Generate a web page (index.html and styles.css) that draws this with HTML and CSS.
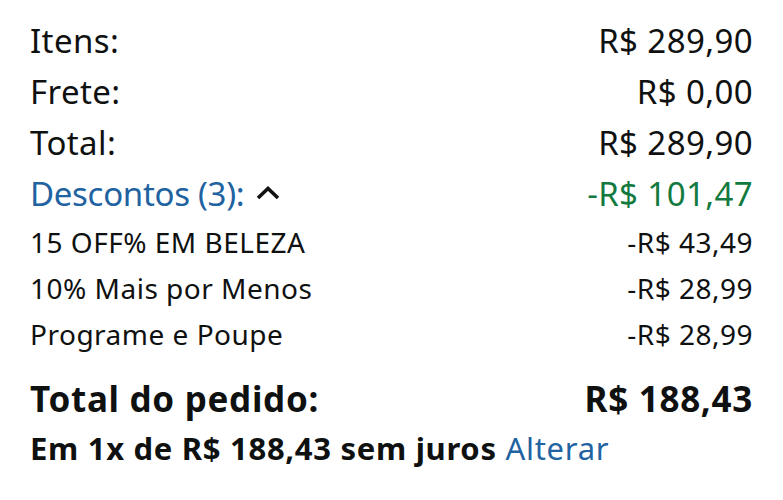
FILE: index.html
```html
<!DOCTYPE html>
<html lang="pt-BR">
<head>
<meta charset="utf-8">
<link rel="stylesheet" href="styles.css">
</head>
<body>
<div class="summary">
  <div class="row main"><span>Itens:</span><span>R$ 289,90</span></div>
  <div class="row main"><span>Frete:</span><span>R$ 0,00</span></div>
  <div class="row main"><span>Total:</span><span>R$ 289,90</span></div>
  <div class="row main">
    <span class="link toggle">Descontos (3):<svg class="chev" width="24" height="14" viewBox="0 0 24 14"><path d="M2 12 L12 2.5 L22 12" fill="none" stroke="#111" stroke-width="3.6"/></svg></span>
    <span class="green">-R$ 101,47</span>
  </div>
  <div class="row sub"><span>15 OFF% EM BELEZA</span><span>-R$ 43,49</span></div>
  <div class="row sub"><span>10% Mais por Menos</span><span>-R$ 28,99</span></div>
  <div class="row sub"><span>Programe e Poupe</span><span>-R$ 28,99</span></div>
  <div class="row grand"><span>Total do pedido:</span><span>R$ 188,43</span></div>
  <div class="install"><b>Em 1x de R$ 188,43 sem juros</b> <span class="link">Alterar</span></div>
</div>
</body>
</html>
```
FILE: styles.css
```css
html, body {
  margin: 0;
  background: #fff;
}
body {
  font-family: "Noto Sans", "Open Sans", sans-serif;
  color: #0f1111;
}
.summary {
  padding: 15px 30px 0 30px;
}
.row {
  display: flex;
  justify-content: space-between;
  align-items: baseline;
}
.main {
  font-size: 33px;
  line-height: 51px;
  letter-spacing: 0.4px;
}
.sub {
  font-size: 28px;
  line-height: 46px;
  letter-spacing: 0.5px;
}
.grand {
  font-size: 35px;
  font-weight: 700;
  line-height: 48px;
  letter-spacing: 0.7px;
  margin-top: 18px;
}
.install {
  font-size: 31px;
  line-height: 44px;
  letter-spacing: 0.7px;
  margin-top: 3px;
}
.install b {
  font-weight: 700;
}
.link {
  color: #2162a1;
}
.toggle {
  letter-spacing: -0.3px;
}
.green {
  color: #137a3f;
}
.chev {
  margin-left: 12px;
  vertical-align: 6px;
}
```
